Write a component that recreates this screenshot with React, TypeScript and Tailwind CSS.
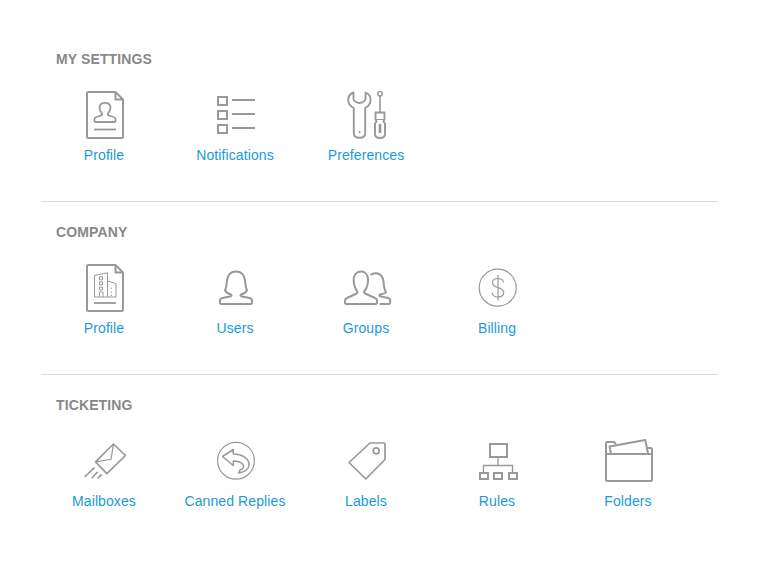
import React from "react";

const G = "#999";

const Profile = () => (
  <svg width="56" height="56" viewBox="76 88 56 56" fill="none" stroke={G}>
    <path d="M115.5 92H88.5Q87 92 87 93.5V136.5Q87 138 88.5 138H121.5Q123 138 123 136.5V99.5L115.5 92V99.5H123" strokeWidth="2" strokeLinejoin="round" />
    <path d="M96 122H114.5Q115.5 122 115.5 121V119Q115.5 117.5 113.5 117L109 115.5Q107.5 115 108 113.5Q110.5 110.5 110.5 107.5C110.5 104.5 108.5 102.8 105 102.8C101.5 102.8 99.5 104.5 99.5 107.5Q99.5 110.5 102 113.5Q102.5 115 101 115.5L96.5 117Q94.5 117.5 94.5 119V121Q94.5 122 96 122Z" strokeWidth="1.8" />
    <path d="M94 129.5H116" strokeWidth="1.8" />
  </svg>
);

const Notifications = () => (
  <svg width="56" height="56" viewBox="207 88 56 56" fill="none" stroke={G} strokeWidth="2">
    <rect x="218" y="97" width="9" height="8" />
    <rect x="218" y="111" width="9" height="8" />
    <rect x="218" y="125" width="9" height="8" />
    <path d="M232 100H255M232 114H255M232 128H255" />
  </svg>
);

const Preferences = () => (
  <svg width="56" height="56" viewBox="338 88 56 56" fill="none" stroke={G} strokeWidth="1.9">
    <path d="M353.5 92.5C349.5 94 348 97.5 348.2 100.5C348.5 104 350.8 106.5 353.8 108L353.8 133C353.8 136 356 137.8 359.5 137.8C363 137.8 365.2 136 365.2 133L365.2 108C368.2 106.5 370.5 103.5 370.6 100C370.7 97 369 94 365.5 92.5L365.5 99C365.5 101 362 103 359.5 103C357 103 353.5 101 353.5 99Z" strokeLinejoin="round" />
    <circle cx="359.5" cy="132" r="1.1" fill={G} stroke="none" />
    <circle cx="380" cy="93.8" r="2.2" strokeWidth="1.5" />
    <path d="M380 96V112" strokeWidth="1.6" />
    <path d="M375.5 112.5H384.5V119L383.5 121.5 385 123.5V134C385 136.5 383 138 380 138C377 138 375 136.5 375 134V123.5L376.5 121.5 375.5 119Z" strokeLinejoin="round" />
    <path d="M380 124V133" strokeWidth="2.6" />
    <path d="M375.5 119.5H384.5" strokeWidth="1" />
  </svg>
);

const CompanyProfile = () => (
  <svg width="56" height="56" viewBox="76 261 56 56" fill="none" stroke={G}>
    <path d="M115.5 265H88.5Q87 265 87 266.5V309.5Q87 311 88.5 311H121.5Q123 311 123 309.5V272.5L115.5 265V272.5H123" strokeWidth="2" strokeLinejoin="round" />
    <path d="M94 303H116" strokeWidth="1.8" />
    <path d="M94.5 297V275.5L107.5 272.8V297M94.5 297H116V283.5L107.5 281" strokeWidth="1" />
    <path d="M99.5 276.8H102.5V279.8H99.5ZM99.5 281.8H102.5V284.8H99.5ZM99.5 287H102.5V290H99.5ZM99.5 297V292H103V297" strokeWidth="1" />
    <path d="M111.3 287.5V289M111.3 291.5V293M111.3 294.5V296" strokeWidth="1" />
  </svg>
);

const Users = () => (
  <svg width="56" height="56" viewBox="207 261 56 56" fill="none" stroke={G} strokeWidth="2">
    <path d="M221.5 304H250.5Q252 304 252 302.5V300.5Q252 298.5 249.5 298L242 296.5Q239.5 295.8 241 294.5Q245.5 293.5 247 290.5C245.5 287.5 245.5 284 245 280.5C244.2 274.5 241 271.5 236 271.5C231 271.5 227.8 274.5 227 280.5C226.5 284 226.5 287.5 225 290.5Q226.5 293.5 231 294.5Q232.5 295.8 230 296.5L222.5 298Q220 298.5 220 300.5V302.5Q220 304 221.5 304Z" strokeLinejoin="round" />
  </svg>
);

const Groups = () => (
  <svg width="56" height="56" viewBox="338 261 56 56" fill="none" stroke={G} strokeWidth="2">
    <path d="M346.5 304H375.5Q377 304 377 302.5V300.5Q377 298.8 375 298L365 293.5Q363.5 292.5 364.5 291Q368 287 368 279.5C368 274.5 365 271.5 361 271.5C357 271.5 353.7 274.5 353.7 279.5Q353.7 287 357 291Q358 292.5 356.5 293.5L347 298Q345 298.8 345 300.5V302.5Q345 304 346.5 304Z" strokeLinejoin="round" />
    <path d="M370.5 275C372 273.8 373.5 273.2 375.5 273.2C380.5 273.2 383 276.5 383.5 282C384 287.5 384.5 290 386 292.5Q384.5 293.5 380 294.5Q378.8 295.5 380 296.2L388 298Q390.2 298.5 390.2 300.5V302.5Q390.2 304 388.7 304H379.5" strokeLinejoin="round" />
  </svg>
);

const Billing = () => (
  <svg width="56" height="56" viewBox="469 261 56 56" fill="none" stroke={G}>
    <circle cx="497.7" cy="287.7" r="18.5" strokeWidth="1.2" />
    <path d="M503.5 282.5C503 279.8 501 278.5 498 278.5C494.5 278.5 492.5 280.3 492.5 282.8C492.5 285.8 495 286.8 498 287.6C501.3 288.5 503.7 289.7 503.7 292.6C503.7 295.3 501.5 297 498 297C494.8 297 492.5 295.5 492.2 292.5M498 274.8V300.5" strokeWidth="1.2" />
  </svg>
);

const Mailboxes = () => (
  <svg width="56" height="56" viewBox="76 434 56 56" fill="none" stroke={G} strokeWidth="1.7">
    <path d="M113.5 444L125.5 455.5 106.8 473.7 95.5 461.8Z" strokeLinejoin="round" />
    <path d="M95.5 461.8L111 459.3 113.5 444" strokeWidth="1.3" />
    <path d="M84.5 477L94.5 467.7M91.7 478.3L97.7 471.7M97.7 478.3L101.7 474.3" />
  </svg>
);

const CannedReplies = () => (
  <svg width="56" height="56" viewBox="207 434 56 56" fill="none" stroke={G}>
    <circle cx="236" cy="460.7" r="18.4" strokeWidth="1.2" />
    <path d="M222.5 456.5L233.3 449.5V454C242 454 249.5 458.5 249 465C248.7 469.5 244 472 238.5 473L240 470C243.5 469 244.5 466.5 242.5 464C240 461.5 236.5 461 233.3 461V465.5Z" strokeWidth="1.5" strokeLinejoin="round" />
  </svg>
);

const Labels = () => (
  <svg width="56" height="56" viewBox="338 434 56 56" fill="none" stroke={G} strokeWidth="1.7">
    <path d="M370 443H384Q385 443 385 444V459.5L365.8 479 349 462.5Z" strokeLinejoin="round" />
    <circle cx="376.2" cy="450.8" r="3" />
  </svg>
);

const Rules = () => (
  <svg width="56" height="56" viewBox="469 434 56 56" fill="none" stroke={G} strokeWidth="2">
    <rect x="490" y="444" width="17" height="13" />
    <path d="M498 458V465M483.5 472V465.5H512.5V472" strokeWidth="1.4" />
    <rect x="480" y="473" width="8" height="6" />
    <rect x="494" y="473" width="8" height="6" />
    <rect x="509" y="473" width="8" height="6" />
  </svg>
);

const Folders = () => (
  <svg width="56" height="56" viewBox="600 434 56 56" fill="none" stroke={G} strokeWidth="2">
    <path d="M606 454V443.5Q606 442 607.5 442H613Q615.5 442 615.5 444.5" strokeLinejoin="round" />
    <path d="M611 453.5L609.5 446.5 645.3 440 648 453.5" strokeLinejoin="round" />
    <path d="M647 448H650.5Q652 448 652 449.5V454" strokeLinejoin="round" />
    <path d="M606 454H652V479.5Q652 481 650.5 481H607.5Q606 481 606 479.5Z" strokeLinejoin="round" />
  </svg>
);

const sections = [
  { title: "MY SETTINGS", items: [["Profile", Profile], ["Notifications", Notifications], ["Preferences", Preferences]] },
  { title: "COMPANY", items: [["Profile", CompanyProfile], ["Users", Users], ["Groups", Groups], ["Billing", Billing]] },
  { title: "TICKETING", items: [["Mailboxes", Mailboxes], ["Canned Replies", CannedReplies], ["Labels", Labels], ["Rules", Rules], ["Folders", Folders]] },
] as const;

export default function App() {
  return (
    <div className="min-h-[568px] bg-white pt-[49px] font-['Liberation_Sans',Arial,sans-serif]">
      <div className="ml-[41px] flex w-[677px] flex-col">
        {sections.map((s, i) => (
          <section key={i} className={i < 2 ? "mb-5 border-b border-[#dddddd] pb-9" : ""}>
            <h2 className="pl-[15px] text-sm leading-5 font-bold tracking-[0.12px] text-[#888888]">{s.title}</h2>
            <div className="mt-[19px] flex gap-[35px] pl-[15px]">
              {s.items.map(([label, Icon]) => (
                <a key={label} className="flex w-24 flex-col items-center">
                  <Icon />
                  <span className="mt-px text-sm leading-5 tracking-[0.1px] whitespace-nowrap text-[#1a9ad9]">{label}</span>
                </a>
              ))}
            </div>
          </section>
        ))}
      </div>
    </div>
  );
}
